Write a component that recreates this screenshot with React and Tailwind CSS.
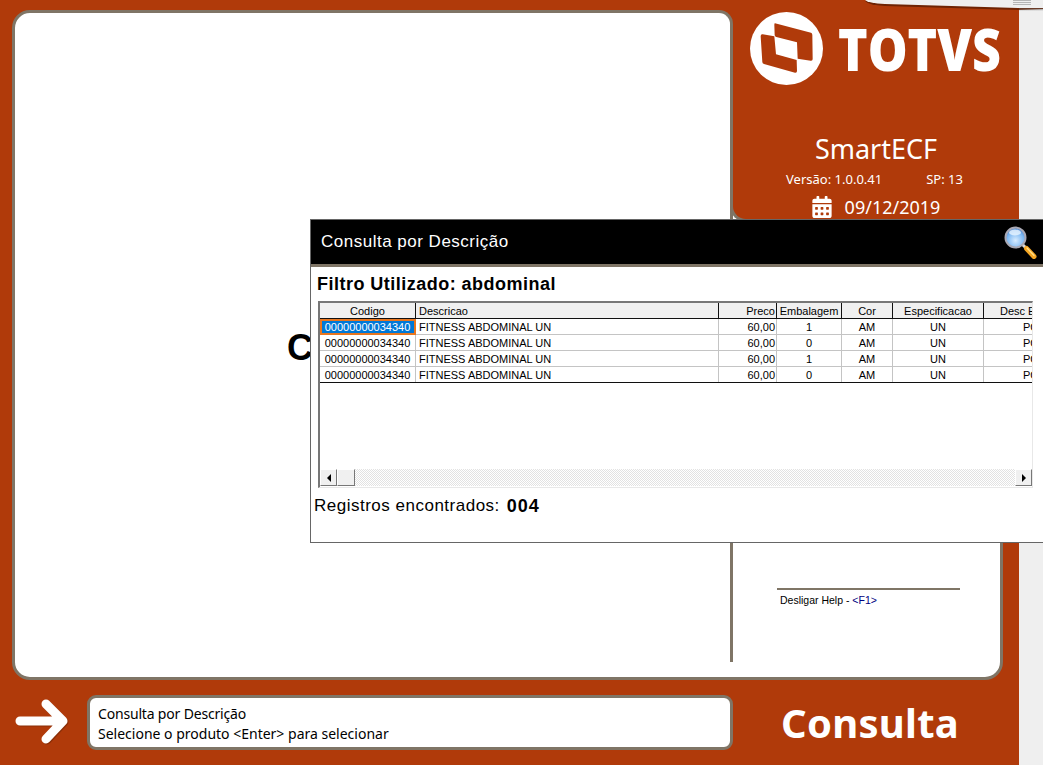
import React from "react";
import { FaCalendarAlt } from "react-icons/fa";

const rows = [
  ["00000000034340", "1", true],
  ["00000000034340", "0", false],
  ["00000000034340", "1", false],
  ["00000000034340", "0", false],
];

function Logo() {
  return (
    <svg width="73" height="73" viewBox="22 21 219 219" className="shrink-0">
      <circle cx="131.5" cy="130.5" r="109.5" fill="#fff" />
      <path d="M97 55 L205 83 Q209 84 209 90 L210 162 Q210 168 204 167 L165 161 L163 112 L101 96 Q96 95 96 90 L95 60 Q95 54 97 55 Z" fill="#b03a0a" />
      <path d="M60 88 L95 94 L100 148 L162 165 L163 198 Q163 204 157 203 L64 177 Q59 176 59 171 L54 94 Q54 87 60 88 Z" fill="#b03a0a" />
    </svg>
  );
}

function Magnifier() {
  return (
    <svg width="34" height="34" viewBox="0 0 34 34" className="shrink-0">
      <defs>
        <radialGradient id="lens" cx="50%" cy="65%" r="60%">
          <stop offset="0%" stopColor="#d8ecff" />
          <stop offset="70%" stopColor="#7db8f2" />
          <stop offset="100%" stopColor="#4f86cf" />
        </radialGradient>
      </defs>
      <path d="M20 20 L31 31" stroke="#d9d9d9" strokeWidth="3" strokeLinecap="round" />
      <path d="M23.5 23.5 L31 31.5" stroke="#f5a623" strokeWidth="5" strokeLinecap="round" />
      <path d="M24 23 L31 30.5" stroke="#ffe08a" strokeWidth="1.2" strokeLinecap="round" />
      <circle cx="12.5" cy="12.5" r="10" fill="url(#lens)" stroke="#a9a9b5" strokeWidth="2" />
      <ellipse cx="12" cy="7.5" rx="6" ry="3" fill="#eaf5ff" opacity="0.8" />
    </svg>
  );
}

function Arrow() {
  return (
    <svg width="58" height="50" viewBox="0 0 58 50" className="shrink-0">
      <g fill="none" stroke="#6e2406" strokeOpacity="0.55" strokeWidth="9" strokeLinecap="round" strokeLinejoin="round" transform="translate(1 1)">
        <path d="M5 24 H46 M31 7 L48 24 L31 42" />
      </g>
      <g fill="none" stroke="#fff" strokeWidth="9" strokeLinecap="round" strokeLinejoin="round">
        <path d="M5 24 H46 M31 7 L48 24 L31 42" />
      </g>
    </svg>
  );
}

const headerCell = "bg-[#f0f0f0] border-r border-[#101010] h-[15px] pt-[1px] leading-[14px] overflow-hidden whitespace-nowrap";
const cell = "border-r border-b border-[#c4c4c4] h-[16px] pt-[1px] leading-[14px] overflow-hidden whitespace-nowrap";
const cols = "grid grid-cols-[96px_303px_58px_65px_51px_91px_48px] w-[712px]";

export default function App() {
  return (
    <div className="relative w-[1043px] h-[765px] overflow-hidden flex bg-[#efefef] font-['Liberation_Sans',sans-serif]">
      <div className="relative w-[1019px] h-full bg-[#b03a0a] flex flex-col pl-[12px] pt-[10px]">
        {/* main white panel */}
        <div className="w-[991px] h-[670px] bg-white border-[3px] border-[#7f7566] rounded-[18px] flex">
          <div className="w-[718px] h-[649px] border-r-[3px] border-[#7f7566] flex items-center pl-[272px] pt-[20px]">
            <span className="text-[36px] font-bold text-black leading-none">C</span>
          </div>
          <div className="flex-1 flex flex-col pl-[44px] pt-[575px]">
            <div className="w-[183px] h-[2px] bg-[#7f7566]" />
            <div className="text-[10.5px] leading-[12px] mt-[4px] ml-[3px] text-black whitespace-nowrap">
              Desligar Help - <span className="text-[#000080]">&lt;F1&gt;</span>
            </div>
          </div>
        </div>

        {/* bottom bar */}
        <div className="flex items-center h-[85px] -ml-[12px] pl-[15px] pb-[1px]">
          <div className="w-[58px] -mt-[1px]"><Arrow /></div>
          <div className="ml-[14px] w-[646px] h-[55px] bg-white border-[3px] border-[#7f7566] rounded-[9px] pl-[8px] pt-[4px] flex flex-col justify-center text-[14px] leading-[20px] text-black font-['Noto_Sans',sans-serif]">
            <div className="tracking-[-0.18px]">Consulta por Descrição</div>
            <div>Selecione o produto &lt;Enter&gt; para selecionar</div>
          </div>
          <div className="ml-[48px] pt-[2px] text-[40px] font-bold leading-none tracking-[0.25px] text-white font-['Noto_Sans',sans-serif]">Consulta</div>
        </div>

        {/* orange block over the panel's top right */}
        <div className="absolute left-[730px] top-0 w-[289px] h-[222px] bg-[#b03a0a] border-l-[3px] border-b-[3px] border-[#7f7566] rounded-bl-[16px] flex flex-col items-center text-white font-['Noto_Sans',sans-serif]">
          <div className="flex items-center self-start pl-[17px] pt-[12px] gap-[15px] w-[286px]">
            <Logo />
            <span className="text-[58px] font-extrabold leading-none font-['Open_Sans',sans-serif] scale-x-[0.865] origin-left">TOTVS</span>
          </div>
          <div className="mt-[45px] text-[27px] leading-[38px]">SmartECF</div>
          <div className="flex text-[13px] leading-[16px] mt-[3px] gap-[44px] -ml-[3px]">
            <span>Versão: 1.0.0.41</span>
            <span>SP: 13</span>
          </div>
          <div className="flex items-center gap-[13px] mt-[8px] text-[18px] leading-[24px]">
            <FaCalendarAlt className="w-[20px] h-[22px]" />
            <span>09/12/2019</span>
          </div>
        </div>
        {/* rounded corner of the white panel against the orange block */}
        <div className="absolute left-[716px] top-0 w-[17px] h-[28px] bg-[#b03a0a] pt-[10px]">
          <div className="h-full bg-white border-t-[3px] border-r-[3px] border-[#7f7566] rounded-tr-[14px]" />
        </div>
      </div>

      {/* right strip */}
      <div className="flex-1 h-full bg-[#efefef]">
        <div className="h-[8px]" />
        <div className="h-[3px] bg-gradient-to-b from-[#8a8a8a] to-[#efefef]" />
      </div>

      {/* top tab */}
      <svg width="178" height="12" viewBox="0 0 178 12" className="absolute left-[865px] top-0">
        <path d="M0 0 Q3 4 20 5 L154 9 L178 8 V0 Z" fill="#5a1c02" opacity="0.75" transform="translate(0 1)" />
        <path d="M0 0 Q3 3 20 4 L154 8 L178 8 V0 Z" fill="#efefef" />
        <path d="M148 0.5 H166 M148 2.5 H166 M148 4.5 H166" stroke="#b5b5b5" strokeWidth="1" />
      </svg>

      {/* dialog window */}
      <div className="absolute left-[310px] top-[219px] w-[740px] h-[324px] bg-white border border-[#666] flex flex-col overflow-hidden">
        <div className="h-[43px] bg-black border-b-[3px] border-[#7f7566] box-content flex items-center pl-[10px] pb-[1px] relative">
          <span className="text-white text-[17px] tracking-[0.5px]">Consulta por Descrição</span>
          <div className="absolute left-[692px] top-[5px]"><Magnifier /></div>
        </div>
        <div className="pl-[6px] pt-[5px] text-[18px] font-bold leading-[24px] text-black tracking-[0.48px]">Filtro Utilizado: abdominal</div>
        <div className="ml-[7px] mt-[5px] w-[715px] h-[187px] border border-l-[2px] border-t-[2px] border-t-[#777] border-l-[#777] border-r-[#e8e8e8] border-b-[#e8e8e8] bg-white flex flex-col overflow-hidden text-[11px] text-black">
          <div className="flex-1 overflow-hidden">
            <div className={`${cols} border-b border-[#101010]`}>
              <div className={`${headerCell} text-center`}>Codigo</div>
              <div className={`${headerCell} pl-[3px]`}>Descricao</div>
              <div className={`${headerCell} text-right pr-[1px]`}>Preco</div>
              <div className={`${headerCell} text-center`}>Embalagem</div>
              <div className={`${headerCell} text-center`}>Cor</div>
              <div className={`${headerCell} text-center`}>Especificacao</div>
              <div className={`${headerCell} text-left pl-[16px] border-r-0`}>Desc Embalagem</div>
            </div>
            <div className="w-[712px]">
              {rows.map(([code, emb, sel], i) => (
                <div key={i} className={cols}>
                  <div className={`${cell} text-center ${sel ? "bg-[#0078d7] text-white outline-2 -outline-offset-2 outline-[#e8761f]" : ""}`}>{code}</div>
                  <div className={`${cell} pl-[3px]`}>FITNESS ABDOMINAL UN</div>
                  <div className={`${cell} text-right pr-[1px]`}>60,00</div>
                  <div className={`${cell} text-center`}>{emb}</div>
                  <div className={`${cell} text-center`}>AM</div>
                  <div className={`${cell} text-center`}>UN</div>
                  <div className={`${cell} text-left pl-[39px] border-r-0`}>PC</div>
                </div>
              ))}
              <div className="relative -mt-[1px] h-[1px] bg-[#101010]" />
            </div>
          </div>
          <div className="h-[17px] flex shrink-0 mb-[1px] bg-[repeating-conic-gradient(#e2e2e2_0_25%,#ffffff_0_50%)] bg-[length:2px_2px]">
            <div className="w-[17px] border border-[#fff] border-r-[#777] border-b-[#777] bg-[#f0f0f0] flex items-center justify-center">
              <div className="border-y-[4px] border-r-[4px] border-y-transparent border-r-black" />
            </div>
            <div className="w-[18px] border border-[#fff] border-r-[#777] border-b-[#777] bg-[#f0f0f0]" />
            <div className="flex-1" />
            <div className="w-[17px] border border-[#fff] border-r-[#777] border-b-[#777] bg-[#f0f0f0] flex items-center justify-center">
              <div className="border-y-[4px] border-l-[4px] border-y-transparent border-l-black" />
            </div>
          </div>
        </div>
        <div className="flex items-center pl-[3px] mt-[6px] text-black">
          <span className="text-[17px] leading-[22px] tracking-[0.5px]">Registros encontrados:</span>
          <span className="ml-[7px] text-[18px] font-bold leading-[24px] tracking-[1px]">004</span>
        </div>
      </div>
    </div>
  );
}
